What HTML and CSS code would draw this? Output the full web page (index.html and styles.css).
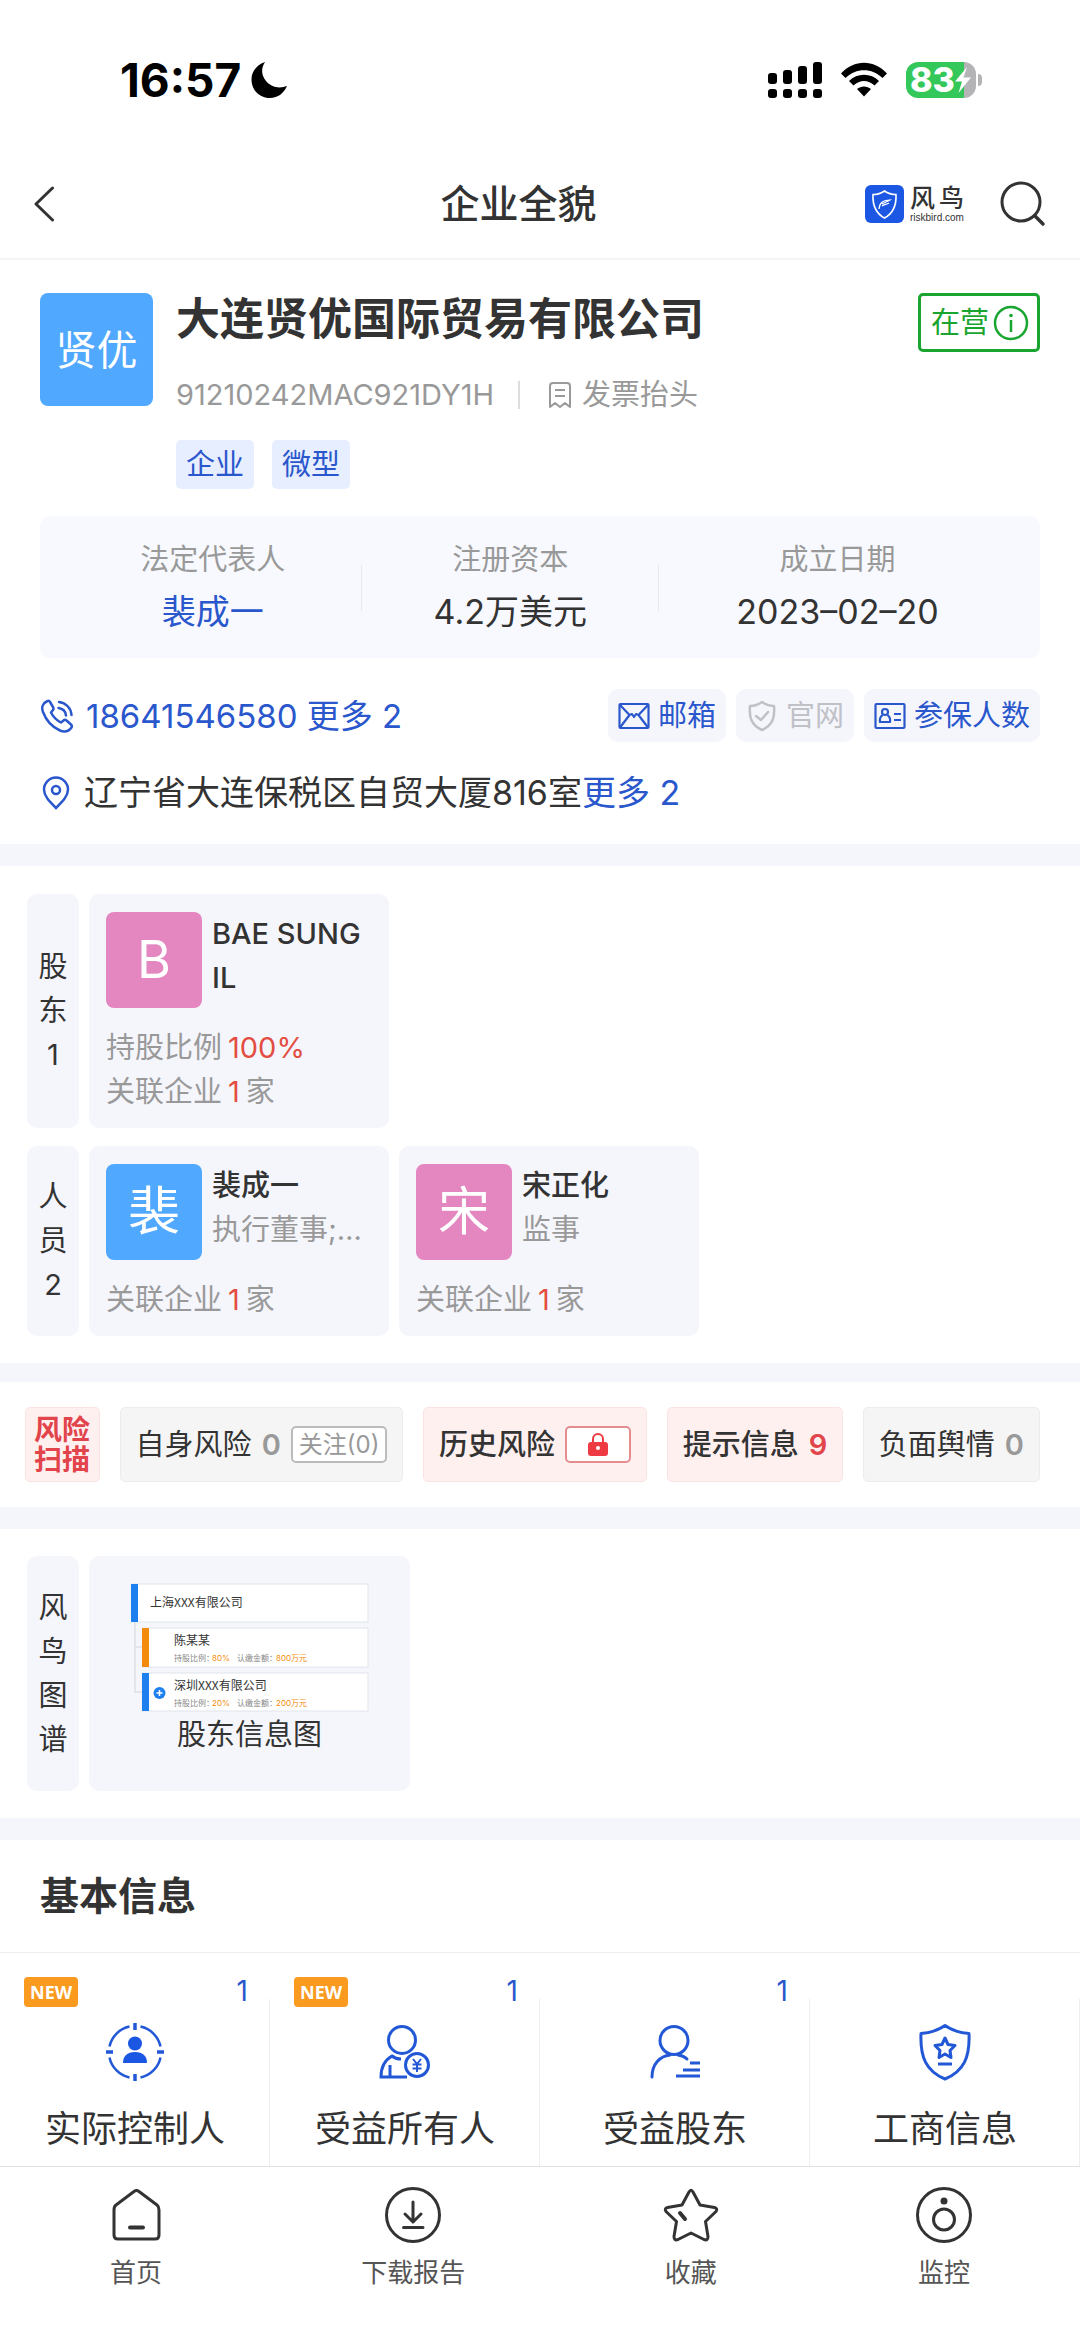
FILE: index.html
```html
<!DOCTYPE html>
<html lang="zh-CN">
<head>
<meta charset="utf-8">
<meta name="viewport" content="width=device-width, initial-scale=1">
<title>企业全貌</title>
<link rel="stylesheet" href="styles.css">
</head>
<body>
<div class="status-bar">
  <div class="status-left">
    <span class="clock">16:57</span>
    <svg width="36" height="36" viewBox="0 0 36 36"><path d="M14 0C3 4 -1 13 1 22C3 31 11 36 19 36C27 36 33 31 36 24C28 27 20 25 15 19C10 13 10 6 14 0Z" fill="#000"/></svg>
  </div>
  <div class="status-right">
    <svg width="54" height="36" viewBox="0 0 54 36"><rect x="0" y="11" width="9" height="11" rx="3"/><rect x="15" y="8" width="9" height="14" rx="3"/><rect x="30" y="4" width="9" height="18" rx="3"/><rect x="45" y="0" width="9" height="22" rx="3"/><rect x="0" y="27" width="9" height="9" rx="3"/><rect x="15" y="27" width="9" height="9" rx="3"/><rect x="30" y="27" width="9" height="9" rx="3"/><rect x="45" y="27" width="9" height="9" rx="3"/></svg>
    <svg width="48" height="36" viewBox="0 0 48 36"><path d="M1 11.500C14 -3 34 -3 47 11.500L42.500 16C32 5.500 16 5.500 5.500 16ZM9 19C17 10.500 31 10.500 39 19L34.500 23.500C28 17.500 20 17.500 13.500 23.500ZM17 27C21 23.500 27 23.500 31 27L24 34.500Z"/></svg>
    <div class="battery">
      <span class="battery-body"><span class="battery-level">83</span><svg class="bolt" width="16" height="26" viewBox="0 0 16 26"><path d="M12 0L0 14.500H7L3.500 26L16 10.500H8.500Z" fill="#fff"/></svg></span>
      <span class="battery-tip"></span>
    </div>
  </div>
</div>

<header class="nav">
  <button class="icon-button back" aria-label="返回"><svg width="20" height="36" viewBox="0 0 20 36"><path d="M18.500 2L2 18L18.500 34" fill="none" stroke="#333" stroke-width="3" stroke-linecap="round" stroke-linejoin="round"/></svg></button>
  <h1 class="nav-title">企业全貌</h1>
  <a class="brand" href="#">
    <svg width="39" height="38" viewBox="0 0 39 38"><rect width="39" height="38" rx="6" fill="#1b57e2"/><path d="M19.500 6C16 8.500 12 9.500 8 9.500C7.500 20 10 28 19.500 33C29 28 31.500 20 31 9.500C27 9.500 23 8.500 19.500 6Z" fill="none" stroke="#fff" stroke-width="1.600"/><path d="M14 24C14.500 18 17 15.500 25 15C22 17 19 17.500 17 19M24 18C21 19.500 19 19.500 17 21" fill="none" stroke="#fff" stroke-width="1.200"/></svg>
    <span class="brand-text"><span class="brand-name"><span>风</span><span>鸟</span></span><span class="brand-url">riskbird.com</span></span>
  </a>
  <button class="icon-button" aria-label="搜索"><svg width="46" height="46" viewBox="0 0 46 46"><circle cx="21" cy="21" r="19" fill="none" stroke="#333" stroke-width="3"/><path d="M35 35L43 43" stroke="#333" stroke-width="3.500" stroke-linecap="round"/></svg></button>
</header>

<main>
<section class="company">
  <div class="company-head">
    <div class="company-logo">贤优</div>
    <div class="company-info">
      <div class="company-title">
        <h2>大连贤优国际贸易有限公司</h2>
        <button class="state">在营<svg width="36" height="36" viewBox="0 0 36 36"><circle cx="18" cy="18" r="16" fill="none" stroke="#19a52f" stroke-width="2.500"/><path d="M18 15V27" stroke="#19a52f" stroke-width="2.500"/><circle cx="18" cy="10.500" r="1.800" fill="#19a52f"/></svg></button>
      </div>
      <div class="company-code">
        <span>91210242MAC921DY1H</span>
        <a class="invoice" href="#"><svg width="24" height="28" viewBox="0 0 24 28"><path d="M2 26V5Q2 2 5 2H19Q22 2 22 5V26L17 22L12 26L7 22ZM7 9H17M7 15H17" fill="none" stroke="#999" stroke-width="2" stroke-linejoin="round"/></svg>发票抬头</a>
      </div>
      <div class="tags"><span class="tag">企业</span><span class="tag">微型</span></div>
    </div>
  </div>
  <dl class="facts">
    <div><dt>法定代表人</dt><dd><a href="#">裴成一</a></dd></div>
    <div><dt>注册资本</dt><dd>4.2万美元</dd></div>
    <div><dt>成立日期</dt><dd>2023–02–20</dd></div>
  </dl>
  <div class="contact">
    <a class="phone" href="#"><svg width="34" height="34" viewBox="0 0 34 34" fill="none" stroke="#2a57cc" stroke-width="2.500" stroke-linecap="round" stroke-linejoin="round"><path d="M7.500 2C3 4 1 8 3 13C6 21 12 28 20 31.500C25 33.500 29 32 31.500 28.500C32 27.500 32 26.500 31 25.500L26.500 21.500C25.500 20.500 24.500 20.500 23.500 21.500L21 23.500C17 21.500 13 17.500 11 13.500L13 11C14 10 13.500 9 13 8L10 3C9.500 2 8.500 1.500 7.500 2Z"/><path d="M19 3C26 4 31 9 31.500 16M18.500 9C22.500 9.500 25.500 12.500 26 16.500"/></svg>18641546580 更多 2</a>
    <div class="actions">
      <button class="action"><svg width="32" height="28" viewBox="0 0 32 28" fill="none" stroke="#2a57cc" stroke-width="2.200" stroke-linejoin="round"><rect x="1.500" y="2" width="29" height="24" rx="1"/><path d="M2 3L11.500 13L14 12L16 15L18 12L20.500 13L30 3M2 25.500L11.500 13M30 25.500L20.500 13"/></svg>邮箱</button>
      <button class="action" disabled><svg width="32" height="32" viewBox="0 0 32 32" fill="none" stroke="#bfc1c7" stroke-width="2.500" stroke-linecap="round" stroke-linejoin="round"><path d="M16 2C12 5 8 6 4 6C3 17 5 25 16 30C27 25 29 17 28 6C24 6 20 5 16 2Z"/><path d="M10 16L15 20L22 12"/></svg>官网</button>
      <button class="action"><svg width="32" height="28" viewBox="0 0 32 28" fill="none" stroke="#2a57cc" stroke-width="2.200" stroke-linejoin="round"><rect x="1.500" y="2" width="29" height="24" rx="1"/><circle cx="11" cy="10" r="3"/><path d="M8.500 13C6 15 5.500 17 6 20H16C16.500 17 16 15 13.500 13M20 12H27M20 18H27"/></svg>参保人数</button>
    </div>
  </div>
  <p class="address"><svg width="34" height="34" viewBox="0 0 34 34" fill="none" stroke="#2a57cc" stroke-width="2.500"><path d="M16 32C9 25 4 20 4 13.500A12 12 0 0 1 28 13.500C28 20 23 25 16 32Z"/><circle cx="16" cy="14" r="4"/></svg><span>辽宁省大连保税区自贸大厦816室<a href="#">更多 2</a></span></p>
</section>

<section class="block people">
  <div class="group">
    <h3 class="side-label">股东1</h3>
    <article class="card">
      <div class="person"><span class="avatar pink">B</span><div class="person-text"><h4>BAE SUNG IL</h4></div></div>
      <p>持股比例<em>100%</em></p>
      <p>关联企业<em>1</em>家</p>
    </article>
  </div>
  <div class="group">
    <h3 class="side-label">人员2</h3>
    <article class="card">
      <div class="person"><span class="avatar">裴</span><div class="person-text"><h4>裴成一</h4><span class="role">执行董事;…</span></div></div>
      <p>关联企业<em>1</em>家</p>
    </article>
    <article class="card">
      <div class="person"><span class="avatar pink">宋</span><div class="person-text"><h4>宋正化</h4><span class="role">监事</span></div></div>
      <p>关联企业<em>1</em>家</p>
    </article>
  </div>
</section>

<section class="risk">
  <h3 class="risk-label">风险扫描</h3>
  <a class="risk-item" href="#">自身风险<b>0</b><span class="follow">关注(0)</span></a>
  <a class="risk-item alert" href="#">历史风险<span class="lock"><svg width="22" height="26" viewBox="0 0 22 26"><path d="M6 12V7A5 5 0 0 1 16 7V12" fill="none" stroke="#ee3a41" stroke-width="2"/><rect x="1" y="10" width="20" height="14" rx="3" fill="#ee3a41"/><circle cx="11" cy="16" r="2" fill="#fff"/></svg></span></a>
  <a class="risk-item alert" href="#">提示信息<b>9</b></a>
  <a class="risk-item" href="#">负面舆情<b>0</b></a>
</section>

<section class="block">
  <div class="group">
    <h3 class="side-label">风鸟图谱</h3>
    <a class="graph" href="#">
      <svg width="238" height="128" viewBox="0 0 238 128" class="graph-art">
        <path d="M4 38V109H11M4 64H11" fill="none" stroke="#dcdfe6" stroke-width="1.500"/>
        <g fill="#fff" stroke="#e1e4ec"><rect x="1" y="1" width="236" height="38"/><rect x="12" y="45" width="225" height="39"/><rect x="12" y="90" width="225" height="38"/></g>
        <path d="M0 1H7V39H0ZM11 90H18V128H11Z" fill="#1d80ee"/><path d="M11 45H18V84H11Z" fill="#f58b0c"/>
        <circle cx="28.500" cy="110" r="6" fill="#1d80ee"/><path d="M25.500 110H31.500M28.500 107V113" stroke="#fff" stroke-width="1.500"/>
        <g class="graph-name"><text x="19" y="24">上海XXX有限公司</text><text x="43" y="62">陈某某</text><text x="43" y="107">深圳XXX有限公司</text></g>
        <g class="graph-note"><text x="43" y="78">持股比例：</text><text x="106" y="78">认缴金额：</text><text x="43" y="123">持股比例：</text><text x="106" y="123">认缴金额：</text></g>
        <g class="graph-note value"><text x="81" y="78">80%</text><text x="145" y="78">800万元</text><text x="81" y="123">20%</text><text x="145" y="123">200万元</text></g>
      </svg>
      <span>股东信息图</span>
    </a>
  </div>
</section>

<section class="basic">
  <h3>基本信息</h3>
  <div class="tiles">
    <a class="tile" href="#"><span class="new">NEW</span><span class="count">1</span>
      <svg width="58" height="58" viewBox="0 0 58 58" fill="none" stroke="#2257d6" stroke-width="2.500"><path d="M34.500 3.500A26 26 0 0 1 54.500 23.500M54.500 34.500A26 26 0 0 1 34.500 54.500M23.500 54.500A26 26 0 0 1 3.500 34.500M3.500 23.500A26 26 0 0 1 23.500 3.500"/><path d="M29 0V7M29 51V58M0 29H7M51 29H58" stroke-width="3.500"/><circle cx="29" cy="20.500" r="7" fill="#1b57e2" stroke="none"/><path d="M17 40C17 33 21 29 29 29S41 33 41 40Z" fill="#1b57e2" stroke="none"/></svg>
      <span class="tile-name">实际控制人</span></a>
    <a class="tile" href="#"><span class="new">NEW</span><span class="count">1</span>
      <svg width="58" height="58" viewBox="0 0 58 58" fill="none" stroke="#2257d6" stroke-width="3"><circle cx="26" cy="17" r="13.500"/><path d="M31 54H5C5 44 9 37 16 33C19 35.500 22 36 25 36M14 54V42"/><circle cx="41" cy="42" r="11.500"/><path d="M37 36L41 41L45 36M41 41V49M36.500 41.500H45.500M36.500 45.500H45.500" stroke-width="2"/></svg>
      <span class="tile-name">受益所有人</span></a>
    <a class="tile" href="#"><span class="count">1</span>
      <svg width="58" height="58" viewBox="0 0 58 58" fill="none" stroke="#2257d6" stroke-width="3"><circle cx="28" cy="17.500" r="14"/><path d="M6 54C6 41 14 33 24 32M32 32C36 32.500 39 34 41 36" stroke-linecap="round"/><path d="M44 40H54M37 47H54M30 53H54"/></svg>
      <span class="tile-name">受益股东</span></a>
    <a class="tile" href="#">
      <svg width="58" height="58" viewBox="0 0 58 58" fill="none" stroke="#2257d6" stroke-width="3" stroke-linejoin="round"><path d="M29 2.500C21 8 13 10 5 10.500C4 34 10 48 29 56C48 48 54 34 53 10.500C45 10 37 8 29 2.500Z"/><path d="M29 15L32 21.500L39 22.500L34 27.500L35 34.500L29 31L23 34.500L24 27.500L19 22.500L26 21.500Z"/><path d="M22 41H36"/></svg>
      <span class="tile-name">工商信息</span></a>
  </div>
</section>
</main>

<nav class="tabs">
  <a class="tab" href="#"><svg width="56" height="56" viewBox="0 0 56 56" fill="none" stroke="#333" stroke-width="3" stroke-linejoin="round" stroke-linecap="round"><path d="M26 4.500Q28.500 2.500 31 4.500L49 18Q51 19.500 51 23V48Q51 52 47 52H10Q6 52 6 48V23Q6 19.500 8 18Z"/><path d="M22 40.500H35" stroke-width="4"/></svg>首页</a>
  <a class="tab" href="#"><svg width="56" height="56" viewBox="0 0 56 56" fill="none" stroke="#333" stroke-width="3" stroke-linejoin="round" stroke-linecap="round"><circle cx="28" cy="28" r="26.500"/><path d="M28 15V34M20 27L28 35L36 27M18.500 40.500H38"/></svg>下载报告</a>
  <a class="tab" href="#"><svg width="56" height="56" viewBox="0 0 56 56" fill="none" stroke="#333" stroke-width="3" stroke-linejoin="round" stroke-linecap="round"><path d="M26 5Q28 1.500 30 5L37 18L51.500 20.500Q55 21.500 53 24.500L42.500 34.500L45 49.500Q45 54 41 52.500L28 46L15 52.500Q11 54 11 49.500L13.500 34.500L3 24.500Q1 21.500 4.500 20.500L19 18Z"/><path d="M17 26L22 32" stroke-width="4"/></svg>收藏</a>
  <a class="tab" href="#"><svg width="56" height="56" viewBox="0 0 56 56" fill="none" stroke="#333" stroke-width="3"><circle cx="28" cy="28" r="26.500"/><circle cx="28" cy="32.500" r="10.500"/><circle cx="28" cy="14" r="3.500" fill="#333" stroke="none"/></svg>监控</a>
</nav>
</body>
</html>
```
FILE: styles.css
```css
* {
  box-sizing: border-box;
  margin: 0;
  padding: 0;
}

body {
  background: #fff;
  color: #333;
  font-family: Inter, "Noto Sans CJK SC", sans-serif;
  font-size: 29px;
  line-height: 44px;
}

a {
  color: #2a57cc;
  text-decoration: none;
}

button {
  border: 0;
  background: none;
  color: inherit;
  font: inherit;
}

svg {
  display: block;
  flex: none;
}

h1, h2, h3, h4 {
  font-size: inherit;
  font-weight: 500;
}

/* Status bar */
.status-bar {
  display: flex;
  justify-content: space-between;
  padding: 56px 98px 46px 120px;
  color: #000;
  line-height: 48px;
}

.status-left,
.status-right {
  display: flex;
  align-items: center;
}

.status-left {
  gap: 10px;
}

.status-right {
  gap: 18px;
}

.clock {
  font-size: 46px;
  font-weight: 700;
}

.battery {
  display: flex;
  align-items: center;
  gap: 2px;
}

.battery-body {
  display: flex;
  align-items: center;
  width: 70px;
  height: 36px;
  padding-left: 4px;
  border-radius: 12px;
  background: linear-gradient(to right, #34c759 58px, #b4b4b6 58px);
}

.battery-level {
  color: #fff;
  font-size: 34px;
  font-weight: 800;
  line-height: 36px;
}

.battery-tip {
  width: 4px;
  height: 12px;
  border-radius: 0 4px 4px 0;
  background: #b4b4b6;
}

/* Navigation */
.nav {
  display: flex;
  align-items: center;
  height: 110px;
  padding: 0 34px;
  border-bottom: 2px solid #f5f5f5;
}

.icon-button {
  display: flex;
}

.back {
  width: 138px;
}

.nav-title {
  flex: 1;
  font-size: 39px;
  text-align: center;
}

.brand {
  display: flex;
  align-items: center;
  gap: 6px;
  margin-right: 36px;
  color: #333;
}

.brand-text {
  display: flex;
  flex-direction: column;
  width: 54px;
}

.brand-name {
  display: flex;
  justify-content: space-between;
  font-size: 25px;
  font-weight: 500;
  line-height: 28px;
}

.brand-url {
  font-family: "Liberation Sans", sans-serif;
  font-size: 10px;
  line-height: 12px;
}

/* Company summary */
.company {
  padding: 33px 40px 29px;
}

.company-head {
  display: flex;
  gap: 23px;
}

.company-logo {
  display: grid;
  flex: none;
  place-items: center;
  width: 113px;
  height: 113px;
  border-radius: 8px;
  background: #51a9ff;
  color: #fff;
  font-size: 41px;
}

.company-info {
  flex: 1;
}

.company-title {
  display: flex;
  align-items: flex-start;
  justify-content: space-between;
}

.company-title h2 {
  font-size: 44px;
  font-weight: 700;
  line-height: 52px;
}

.state {
  display: flex;
  align-items: center;
  gap: 4px;
  height: 59px;
  padding: 0 8px 0 10px;
  border: 3px solid #19a52f;
  border-radius: 5px;
  color: #19a52f;
}

.company-code {
  display: flex;
  align-items: center;
  margin-top: 25px;
  color: #999;
  line-height: 36px;
}

.invoice {
  display: flex;
  align-items: center;
  gap: 10px;
  margin-left: 24px;
  padding-left: 28px;
  border-left: 2px solid #ddd;
  color: #999;
  line-height: 28px;
}

.tags {
  display: flex;
  gap: 18px;
  margin-top: 27px;
}

.tag {
  padding: 0 10px;
  border-radius: 5px;
  background: #e6eeff;
  color: #2a57cc;
  line-height: 49px;
}

.facts {
  display: grid;
  grid-template-columns: 5fr 5fr 6fr;
  align-items: center;
  margin-top: 27px;
  padding: 26px 24px 24px;
  border-radius: 10px;
  background: #f8f9fe;
  text-align: center;
}

.facts > div {
  display: flex;
  flex-direction: column;
  gap: 12px;
  background: linear-gradient(#e6e8ef, #e6e8ef) right center / 1px 46px no-repeat;
}

.facts > div:last-child {
  background: none;
}

.facts dt {
  color: #999;
  line-height: 36px;
}

.facts dd {
  font-size: 34px;
}

.contact {
  display: flex;
  align-items: center;
  justify-content: space-between;
  margin-top: 31px;
}

.phone,
.address {
  display: flex;
  align-items: center;
  gap: 10px;
}

.phone {
  gap: 12px;
  font-size: 33px;
}

.address {
  margin-top: 29px;
  font-size: 34px;
}

.actions {
  display: flex;
  gap: 10px;
}

.action {
  display: flex;
  align-items: center;
  gap: 8px;
  height: 53px;
  padding: 0 10px;
  border-radius: 10px;
  background: #f5f6fc;
  color: #2a57cc;
}

.action:disabled {
  color: #bfc1c7;
}

/* Shareholders, staff and graph */
.block {
  display: flex;
  flex-direction: column;
  gap: 18px;
  padding: 27px;
  border-top: 22px solid #f5f6fc;
}

.people {
  padding-top: 28px;
}

.group {
  display: flex;
  gap: 10px;
}

.side-label {
  display: flex;
  align-items: center;
  width: 52px;
  padding: 0 11px;
  border-radius: 10px;
  background: #f5f6fc;
  font-weight: 400;
  text-align: center;
  word-break: break-all;
}

.card {
  width: 300px;
  padding: 18px 17px 14px;
  border-radius: 10px;
  background: #f5f6fc;
  color: #999;
}

.person {
  display: flex;
  gap: 10px;
  margin-bottom: 18px;
}

.avatar {
  display: grid;
  flex: none;
  place-items: center;
  width: 96px;
  height: 96px;
  border-radius: 8px;
  background: #51a9ff;
  color: #fff;
  font-size: 52px;
}

.pink {
  background: #e486c0;
}

.person-text {
  min-width: 0;
}

.person-text h4 {
  color: #333;
}

.role {
  display: block;
  white-space: nowrap;
}

.card em {
  padding: 0 6px;
  color: #e34d42;
  font-style: normal;
}

/* Risk scan */
.risk {
  display: flex;
  justify-content: space-between;
  padding: 25px 40px 25px 25px;
  border-top: 19px solid #f5f6fc;
}

.risk-label {
  width: 75px;
  height: 75px;
  padding: 7px 8px;
  border: 1px solid #fbe3e3;
  border-radius: 5px;
  background: #fff0f0;
  color: #e2444b;
  font-size: 28px;
  font-weight: 700;
  line-height: 30px;
}

.risk-item {
  display: flex;
  align-items: center;
  gap: 10px;
  height: 75px;
  padding: 0 15px;
  border: 1px solid #ececec;
  border-radius: 5px;
  background: #f5f5f5;
  color: #333;
}

.risk-item b {
  color: #999;
  font-weight: 600;
}

.alert {
  border-color: #fbe3e3;
  background: #fff0f0;
  font-weight: 500;
}

.risk-item.alert b {
  color: #e2444b;
}

.follow,
.lock {
  display: grid;
  place-items: center;
  height: 37px;
  border: 2px solid #bbb;
  border-radius: 5px;
  background: #fff;
  line-height: 32px;
}

.follow {
  padding: 0 6px;
  color: #999;
  font-size: 24px;
}

.lock {
  width: 66px;
  border-color: #e38d90;
}

/* Graph preview */
.graph {
  display: flex;
  flex-direction: column;
  align-items: center;
  gap: 2px;
  width: 321px;
  height: 235px;
  padding-top: 27px;
  border-radius: 10px;
  background: #f5f6fc;
  color: #333;
}

.graph-art {
  overflow: visible;
}

.graph-name {
  fill: #333;
  font-family: "Noto Sans CJK SC", sans-serif;
  font-size: 12px;
}

.graph-note {
  fill: #888;
  font-size: 8px;
}

.graph-note.value {
  fill: #f58b0c;
}

/* Basic information */
.basic {
  border-top: 22px solid #f5f6fc;
}

.basic h3 {
  padding: 34px 40px;
  border-bottom: 1px solid #eee;
  font-size: 39px;
  font-weight: 700;
}

.tiles {
  display: grid;
  grid-template-columns: repeat(4, 1fr);
}

.tile {
  position: relative;
  display: flex;
  flex-direction: column;
  align-items: center;
  gap: 26px;
  padding: 70px 0 15px;
  background: linear-gradient(#eee, #eee) right bottom / 1px 167px no-repeat;
  color: #333;
}

.new,
.count {
  position: absolute;
}

.new {
  top: 24px;
  left: 24px;
  padding: 0 6px;
  border-radius: 4px;
  background: #fa9a1e;
  color: #fff;
  font-family: "Noto Sans", sans-serif;
  font-size: 18px;
  font-weight: 700;
  line-height: 30px;
}

.count {
  top: 16px;
  right: 22px;
  color: #2a57cc;
  font-size: 28px;
}

.tile-name {
  font-size: 36px;
}

/* Bottom tabs */
.tabs {
  display: flex;
  justify-content: space-between;
  padding: 20px 108px 54px;
  border-top: 1px solid #e3e3e3;
}

.tab {
  display: flex;
  flex-direction: column;
  align-items: center;
  gap: 10px;
  color: #555;
  font-size: 26px;
  line-height: 40px;
}
```
